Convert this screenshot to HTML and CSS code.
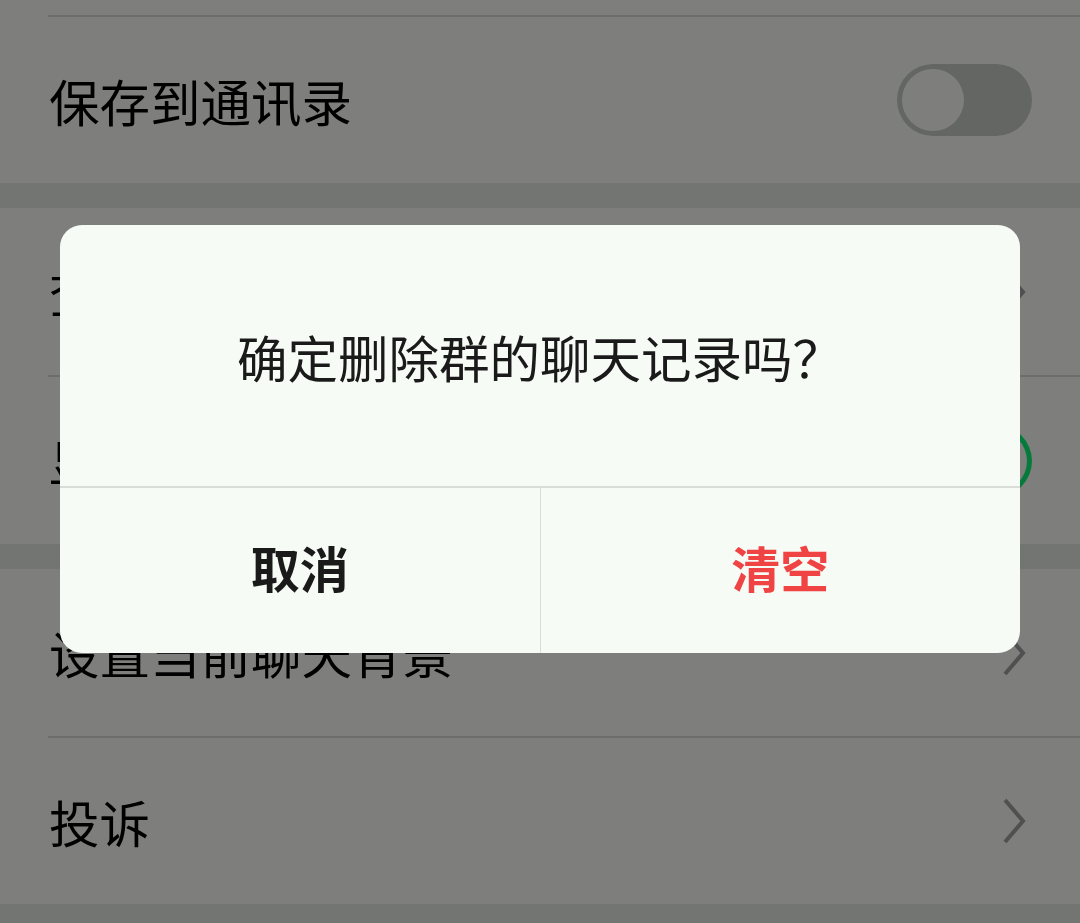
FILE: index.html
```html
<!DOCTYPE html>
<html lang="zh-CN">
<head>
<meta charset="utf-8">
<title>聊天信息</title>
<link rel="stylesheet" href="styles.css">
</head>
<body>
<div class="page">
  <div class="row-cut"></div>
  <div class="sep"></div>
  <div class="row row-short">
    <span class="label">保存到通讯录</span>
    <span class="switch"><span class="knob"></span></span>
  </div>
  <div class="gap"></div>
  <div class="row">
    <span class="label">查找聊天记录</span>
    <svg class="chev" viewBox="0 0 24 46" width="24" height="46"><polyline points="3,2 21,23 3,44"/></svg>
  </div>
  <div class="sep"></div>
  <div class="row">
    <span class="label">显示群成员昵称</span>
    <span class="switch on"><span class="knob"></span></span>
  </div>
  <div class="gap"></div>
  <div class="row">
    <span class="label">设置当前聊天背景</span>
    <svg class="chev" viewBox="0 0 24 46" width="24" height="46"><polyline points="3,2 21,23 3,44"/></svg>
  </div>
  <div class="sep"></div>
  <div class="row row-short">
    <span class="label">投诉</span>
    <svg class="chev" viewBox="0 0 24 46" width="24" height="46"><polyline points="3,2 21,23 3,44"/></svg>
  </div>
  <div class="gap gap-end"></div>
</div>

<div class="overlay">
  <div class="dialog">
    <div class="dialog-msg">确定删除群的聊天记录吗？</div>
    <div class="dialog-actions">
      <button class="btn btn-cancel">取消</button>
      <button class="btn btn-danger">清空</button>
    </div>
  </div>
</div>
</body>
</html>
```

FILE: styles.css
```css
html, body {
  margin: 0;
  padding: 0;
}
body {
  width: 1080px;
  height: 923px;
  overflow: hidden;
  position: relative;
  background: #e6eae4;
  font-family: "Noto Sans CJK SC", "Noto Sans", sans-serif;
}
.page {
  display: flex;
  flex-direction: column;
}
.row-cut {
  height: 15px;
  background: #fcfffa;
}
.sep {
  height: 2px;
  background: #fcfffa;
}
.sep::after {
  content: "";
  display: block;
  margin-left: 48px;
  height: 2px;
  background: #d8dcd6;
}
.row {
  height: 167px;
  background: #fcfffa;
  display: flex;
  align-items: center;
  justify-content: space-between;
  padding: 0 48px 0 49px;
}
.row-short {
  height: 166px;
}
.label {
  font-size: 50.5px;
  color: #000;
  line-height: 1;
}
.gap {
  height: 25px;
  background: #e6eae4;
}
.gap-end {
  height: 20px;
}
.switch {
  width: 135px;
  height: 72px;
  box-sizing: border-box;
  border-radius: 36px;
  background: #c8ccc6;
  padding: 5px;
  display: flex;
  justify-content: flex-start;
}
.switch .knob {
  width: 62px;
  height: 62px;
  border-radius: 50%;
  background: #fcfffa;
}
.switch.on {
  background: #0cf474;
  justify-content: flex-end;
}
.chev {
  margin-right: 6px;
}
.chev polyline {
  fill: none;
  stroke: #a0a0a0;
  stroke-width: 4;
}

.overlay {
  position: absolute;
  inset: 0;
  background: rgba(0, 0, 0, 0.5);
  display: flex;
  justify-content: center;
  align-items: flex-start;
  padding-top: 225px;
}
.dialog {
  width: 960px;
  height: 428px;
  background: #f7fbf6;
  border-radius: 22px;
  display: flex;
  flex-direction: column;
  overflow: hidden;
}
.dialog-msg {
  height: 261px;
  display: flex;
  align-items: center;
  justify-content: center;
  font-size: 50.5px;
  color: #1a1a1a;
  padding-top: 0;
  box-sizing: border-box;
}
.dialog-actions {
  flex: 1;
  display: flex;
  border-top: 2px solid #d9dcd8;
}
.btn {
  flex: 1;
  border: 0;
  background: transparent;
  font-family: "Noto Sans CJK SC", "Noto Sans", sans-serif;
  font-size: 49px;
  font-weight: 700;
  padding: 0 0 8px;
  margin: 0;
}
.btn-cancel {
  color: #1a1a1a;
  border-right: 1px solid #d9dcd8;
}
.btn-danger {
  color: #f04444;
}
```
